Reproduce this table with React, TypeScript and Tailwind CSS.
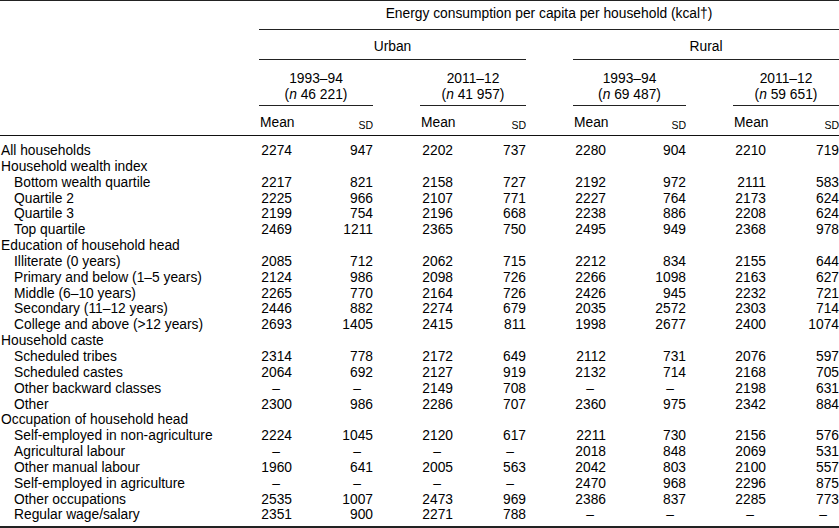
const cols = 'grid grid-cols-[259px_114px_47px_106px_47px_113px_47px_106px]'

type Row = { label: string; indent?: boolean; values?: string[] }

const rows: Row[] = [
  { label: 'All households', values: ['2274', '947', '2202', '737', '2280', '904', '2210', '719'] },
  { label: 'Household wealth index' },
  { label: 'Bottom wealth quartile', indent: true, values: ['2217', '821', '2158', '727', '2192', '972', '2111', '583'] },
  { label: 'Quartile 2', indent: true, values: ['2225', '966', '2107', '771', '2227', '764', '2173', '624'] },
  { label: 'Quartile 3', indent: true, values: ['2199', '754', '2196', '668', '2238', '886', '2208', '624'] },
  { label: 'Top quartile', indent: true, values: ['2469', '1211', '2365', '750', '2495', '949', '2368', '978'] },
  { label: 'Education of household head' },
  { label: 'Illiterate (0 years)', indent: true, values: ['2085', '712', '2062', '715', '2212', '834', '2155', '644'] },
  { label: 'Primary and below (1–5 years)', indent: true, values: ['2124', '986', '2098', '726', '2266', '1098', '2163', '627'] },
  { label: 'Middle (6–10 years)', indent: true, values: ['2265', '770', '2164', '726', '2426', '945', '2232', '721'] },
  { label: 'Secondary (11–12 years)', indent: true, values: ['2446', '882', '2274', '679', '2035', '2572', '2303', '714'] },
  { label: 'College and above (>12 years)', indent: true, values: ['2693', '1405', '2415', '811', '1998', '2677', '2400', '1074'] },
  { label: 'Household caste' },
  { label: 'Scheduled tribes', indent: true, values: ['2314', '778', '2172', '649', '2112', '731', '2076', '597'] },
  { label: 'Scheduled castes', indent: true, values: ['2064', '692', '2127', '919', '2132', '714', '2168', '705'] },
  { label: 'Other backward classes', indent: true, values: ['–', '–', '2149', '708', '–', '–', '2198', '631'] },
  { label: 'Other', indent: true, values: ['2300', '986', '2286', '707', '2360', '975', '2342', '884'] },
  { label: 'Occupation of household head' },
  { label: 'Self-employed in non-agriculture', indent: true, values: ['2224', '1045', '2120', '617', '2211', '730', '2156', '576'] },
  { label: 'Agricultural labour', indent: true, values: ['–', '–', '–', '–', '2018', '848', '2069', '531'] },
  { label: 'Other manual labour', indent: true, values: ['1960', '641', '2005', '563', '2042', '803', '2100', '557'] },
  { label: 'Self-employed in agriculture', indent: true, values: ['–', '–', '–', '–', '2470', '968', '2296', '875'] },
  { label: 'Other occupations', indent: true, values: ['2535', '1007', '2473', '969', '2386', '837', '2285', '773'] },
  { label: 'Regular wage/salary', indent: true, values: ['2351', '900', '2271', '788', '–', '–', '–', '–'] },
]

const Cell = ({ value }: { value: string }) => (
  <span className={`w-[32px] ${value === '–' ? 'text-center' : 'text-right'}`}>{value}</span>
)

const Group = ({ mean, sd }: { mean: string; sd: string }) => (
  <div className="flex justify-between pl-[1px]">
    <Cell value={mean} />
    <Cell value={sd} />
  </div>
)

const Years = ({ year, n }: { year: string; n: string }) => (
  <div className="h-[46px] border-b border-[#222] pt-[11px] text-center leading-[16px]">
    <div>{year}</div>
    <div>
      (<span className="italic">n</span> {n})
    </div>
  </div>
)

const SubHead = () => (
  <div className="flex justify-between pl-[1px]">
    <span>Mean</span>
    <span className="text-[10.5px] pt-[2px]">SD</span>
  </div>
)

export default function App() {
  return (
    <div className="w-[839px] h-[528px] bg-white text-black text-[13.8px] font-['Liberation_Sans',Arial,sans-serif]">
      <div className="border-t border-[#222]">
        <div className={cols}>
          <div className="col-start-2 col-span-7 h-[29px] border-b border-[#222] flex items-center justify-center pb-[1px]">
            Energy consumption per capita per household (kcal†)
          </div>
          <div className="col-start-2 col-span-3 h-[30px] border-b border-[#222] flex items-center justify-center pt-[5px]">
            Urban
          </div>
          <div className="col-start-6 col-span-3 h-[30px] border-b border-[#222] flex items-center justify-center pt-[5px]">
            Rural
          </div>
          <div className="col-start-2">
            <Years year="1993–94" n="46 221" />
          </div>
          <div className="col-start-4">
            <Years year="2011–12" n="41 957" />
          </div>
          <div className="col-start-6">
            <Years year="1993–94" n="69 487" />
          </div>
          <div className="col-start-8">
            <Years year="2011–12" n="59 651" />
          </div>
        </div>
        <div className={`${cols} h-[30px] border-b border-[#111] pt-[9px] leading-[16px]`}>
          <div className="col-start-2">
            <SubHead />
          </div>
          <div className="col-start-4">
            <SubHead />
          </div>
          <div className="col-start-6">
            <SubHead />
          </div>
          <div className="col-start-8">
            <SubHead />
          </div>
        </div>
        <div className="pt-[7px] pb-[3px] border-b-2 border-[#222]">
          {rows.map((row) => (
            <div key={row.label} className={`${cols} h-[15.85px] leading-[15.85px]`}>
              <div className={`whitespace-nowrap ${row.indent ? 'pl-[14px]' : 'pl-[1px]'}`}>{row.label}</div>
              {row.values && (
                <>
                  <Group mean={row.values[0]} sd={row.values[1]} />
                  <div />
                  <Group mean={row.values[2]} sd={row.values[3]} />
                  <div />
                  <Group mean={row.values[4]} sd={row.values[5]} />
                  <div />
                  <Group mean={row.values[6]} sd={row.values[7]} />
                </>
              )}
            </div>
          ))}
        </div>
      </div>
    </div>
  )
}
